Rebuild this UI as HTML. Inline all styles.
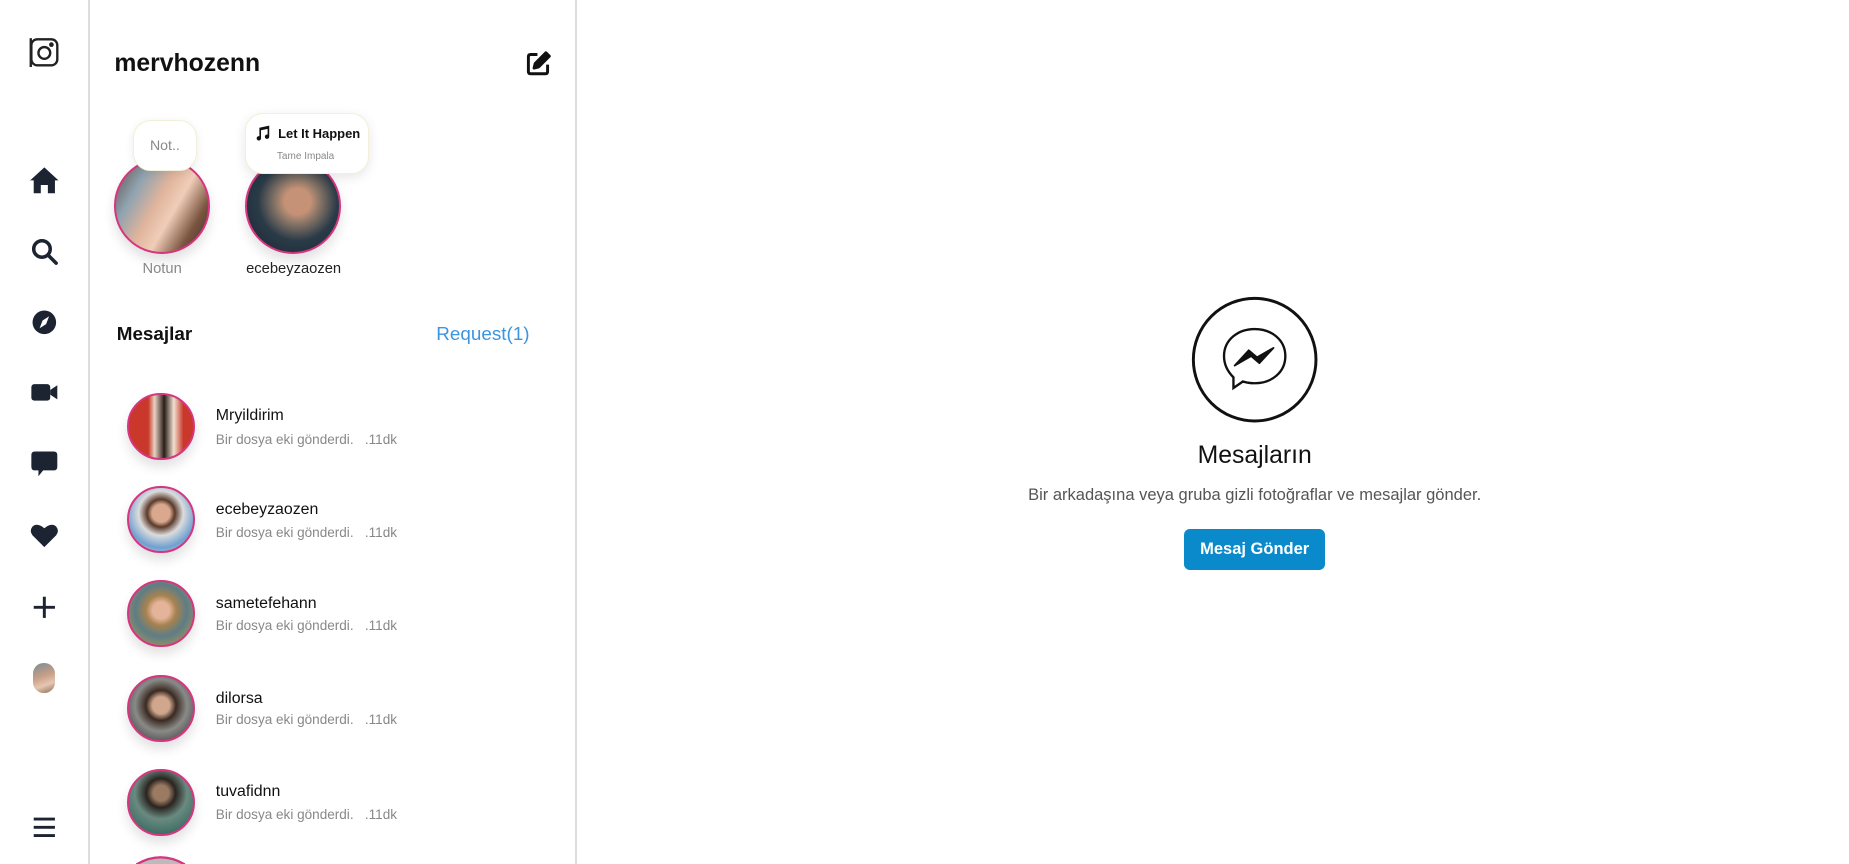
<!DOCTYPE html>
<html><head><meta charset="utf-8">
<style>
html,body{margin:0;padding:0;background:#fff;overflow:hidden}
body{width:1849px;height:864px}
#w{position:relative;width:1568px;height:733px;overflow:hidden;zoom:1.1792;font-family:"Liberation Sans",sans-serif;color:#111}
.a{position:absolute}
.ic{position:absolute;left:25px;width:26px;height:26px}
.av{position:absolute;border-radius:50%;border:2px solid #d6357f;box-sizing:border-box;box-shadow:0 6px 10px rgba(0,0,0,.12);overflow:hidden}
.name{position:absolute;left:183px;font-size:13.5px;color:#111}
.sub{position:absolute;left:183px;font-size:11.5px;color:#888;white-space:pre}
</style></head><body><div id="w">
<div class="a" style="left:75px;top:0;width:1px;height:733px;background:#ddd"></div>
<div class="a" style="left:488px;top:0;width:1px;height:733px;background:#ddd"></div>

<svg class="ic" style="top:31px" viewBox="0 0 26 26" fill="none" stroke="#222" stroke-width="2"><rect x="2" y="2" width="22" height="22" rx="5"/><circle cx="13" cy="13.5" r="5"/><circle cx="19" cy="6.5" r="1" fill="#222"/><line x1="1.5" y1="1" x2="1.5" y2="26" stroke-width="2"/></svg>
<svg class="ic" style="top:140px" viewBox="0 0 26 26" fill="#1c2331"><path d="M13 2 L25 13 H22 V24 H16 V17 H10 V24 H4 V13 H1 Z"/></svg>
<svg class="ic" style="top:200px" viewBox="0 0 26 26" fill="none" stroke="#1c2331" stroke-width="3"><circle cx="11" cy="11" r="7"/><line x1="16" y1="16" x2="23" y2="23" stroke-linecap="round"/></svg>
<svg class="ic" style="top:260px" viewBox="0 0 26 26"><circle cx="13" cy="13" r="10" fill="#1c2331"/><path d="M17 8 L14.5 14.5 L9 18 L11.5 11.5 Z" fill="#fff"/></svg>
<svg class="ic" style="top:320px" viewBox="0 0 26 26" fill="#1c2331"><rect x="2" y="6" width="16" height="14" rx="2.5"/><path d="M18 11 L24 7 V19 L18 15 Z"/></svg>
<svg class="ic" style="top:380px" viewBox="0 0 26 26" fill="#1c2331"><path d="M5 3 H21 Q24 3 24 6 V16 Q24 19 21 19 H12 L8 24 V19 H5 Q2 19 2 16 V6 Q2 3 5 3 Z"/></svg>
<svg class="ic" style="top:441px" viewBox="0 0 26 26" fill="#1c2331"><path d="M13 23 L3 13 Q0 9 3 5.5 Q7 2 13 7 Q19 2 23 5.5 Q26 9 23 13 Z"/></svg>
<svg class="ic" style="top:502px" viewBox="0 0 26 26" stroke="#1c2331" stroke-width="2.5"><line x1="13" y1="4" x2="13" y2="22"/><line x1="4" y1="13" x2="22" y2="13"/></svg>
<div class="a" style="left:28px;top:562px;width:19px;height:26px;border-radius:9px;background:linear-gradient(160deg,#7a8a96 0%,#c9a087 45%,#e6c7b1 70%,#8a6a56 100%)"></div>
<svg class="ic" style="top:689px" viewBox="0 0 26 26" stroke="#1c2331" stroke-width="2.5"><line x1="4" y1="6" x2="22" y2="6"/><line x1="4" y1="13" x2="22" y2="13"/><line x1="4" y1="20" x2="22" y2="20"/></svg>

<div class="a" style="left:97px;top:42px;font-size:21px;font-weight:bold;color:#111">mervhozenn</div>
<svg class="a" style="left:445px;top:42px" width="23" height="23" viewBox="0 0 24 24" fill="none" stroke="#111" stroke-width="2.6" stroke-linejoin="round"><path d="M11 4 H5 Q3 4 3 6 V19 Q3 21 5 21 H18 Q20 21 20 19 V13"/><path d="M18.5 2.5 L21.5 5.5 L12 15 L8 16 L9 12 Z" fill="#111"/></svg>

<div class="av" style="left:97px;top:134px;width:81px;height:81px;background:linear-gradient(120deg,#5a4a42 0%,#8fa3b0 25%,#e0b49c 45%,#f0cdb8 60%,#7a5540 80%,#3a2a24 100%)"></div>
<div class="av" style="left:208px;top:134px;width:81px;height:81px;background:radial-gradient(circle at 55% 45%,#c69277 0 18%,#8d7868 30%,#2a3b48 55%,#1a2430 100%)"></div>
<div class="a" style="left:113px;top:102px;width:52px;height:41px;border:1.5px solid #f2f0d8;border-radius:15px;background:#fff;box-shadow:0 2px 8px rgba(0,0,0,.08);font-size:12px;color:#888;text-align:center;line-height:42px">Not..</div>
<div class="a" style="left:208px;top:96px;width:103px;height:50px;border:1.5px solid #f2f0d8;border-radius:15px;background:#fff;box-shadow:0 3px 10px rgba(0,0,0,.1)">
 <svg class="a" style="left:7px;top:9px" width="13" height="14" viewBox="0 0 14 14" fill="#111"><path d="M4 2 L13 0 V10 A2 2 0 1 1 11.5 8.2 V3 L5.5 4.3 V11.5 A2 2 0 1 1 4 9.7 Z"/></svg>
 <div class="a" style="left:27px;top:10px;font-size:11px;font-weight:bold;color:#111;white-space:nowrap">Let It Happen</div>
 <div class="a" style="left:26px;top:31px;font-size:8.5px;color:#888;white-space:nowrap">Tame Impala</div>
</div>
<div class="a" style="left:97px;top:221px;width:81px;text-align:center;font-size:12.5px;color:#888">Notun</div>
<div class="a" style="left:199px;top:221px;width:100px;text-align:center;font-size:12.5px;color:#222">ecebeyzaozen</div>

<div class="a" style="left:99px;top:274px;font-size:16px;font-weight:bold;color:#111">Mesajlar</div>
<div class="a" style="left:370px;top:274px;font-size:16px;color:#3b95e0">Request(1)</div>

<div class="av" style="left:108px;top:333px;width:57px;height:57px;background:linear-gradient(90deg,#c9382a 0 30%,#e9d2c2 40%,#2a1e18 55%,#f0e0d0 70%,#c9382a 85%)"></div>
<div class="name" style="top:345px">Mryildirim</div><div class="sub" style="top:366px">Bir dosya eki gönderdi.   .11dk</div>
<div class="av" style="left:108px;top:412px;width:57px;height:57px;background:radial-gradient(circle at 50% 40%,#d9a88e 0 18%,#5a3a2a 28%,#dcdcdc 45%,#6ea0d0 70%,#f2f2f2 100%)"></div>
<div class="name" style="top:425px">ecebeyzaozen</div><div class="sub" style="top:445px">Bir dosya eki gönderdi.   .11dk</div>
<div class="av" style="left:108px;top:492px;width:57px;height:57px;background:radial-gradient(circle at 50% 45%,#e3b39a 0 18%,#a7824f 32%,#5d7d86 55%,#c9a040 100%)"></div>
<div class="name" style="top:505px">sametefehann</div><div class="sub" style="top:524px">Bir dosya eki gönderdi.   .11dk</div>
<div class="av" style="left:108px;top:572px;width:57px;height:57px;background:radial-gradient(circle at 50% 45%,#d0a68c 0 18%,#3a2a22 32%,#8a8a88 55%,#2a2a2a 100%)"></div>
<div class="name" style="top:585px">dilorsa</div><div class="sub" style="top:604px">Bir dosya eki gönderdi.   .11dk</div>
<div class="av" style="left:108px;top:652px;width:57px;height:57px;background:radial-gradient(circle at 50% 35%,#9a7a62 0 15%,#2a2420 28%,#6a8a80 50%,#1f5a50 100%)"></div>
<div class="name" style="top:664px">tuvafidnn</div><div class="sub" style="top:684px">Bir dosya eki gönderdi.   .11dk</div>
<svg class="a" style="left:108px;top:725px" width="57" height="8" viewBox="0 0 57 8"><path d="M8 8 Q28.5 -4 49 8" fill="#bbb" stroke="#d6357f" stroke-width="2"/></svg>

<svg class="a" style="left:1010px;top:251px" width="108" height="108" viewBox="0 0 108 108" fill="none" stroke="#111"><circle cx="54" cy="54" r="52" stroke-width="2.5"/><path d="M54 28 C68 28 80 37 80 51 C80 65 68 74 54 74 C50 74 47 73.5 44 72.5 L36 78 L36 69 C31 64 28 58 28 51 C28 37 40 28 54 28 Z" stroke-width="2"/><path d="M37 59 L49 46 L56 52 L70 44 L58 57 L51 51 Z" fill="#111" stroke-width="1.5" stroke-linejoin="round"/></svg>
<div class="a" style="left:864px;top:375px;width:400px;text-align:center;font-size:21px;color:#111">Mesajların</div>
<div class="a" style="left:814px;top:412px;width:500px;text-align:center;font-size:14px;color:#555">Bir arkadaşına veya gruba gizli fotoğraflar ve mesajlar gönder.</div>
<div class="a" style="left:1004px;top:449px;width:120px;height:34px;border-radius:5px;background:#0a8acb;color:#fff;font-weight:bold;font-size:14px;text-align:center;line-height:34px">Mesaj Gönder</div>
</div></body></html>
